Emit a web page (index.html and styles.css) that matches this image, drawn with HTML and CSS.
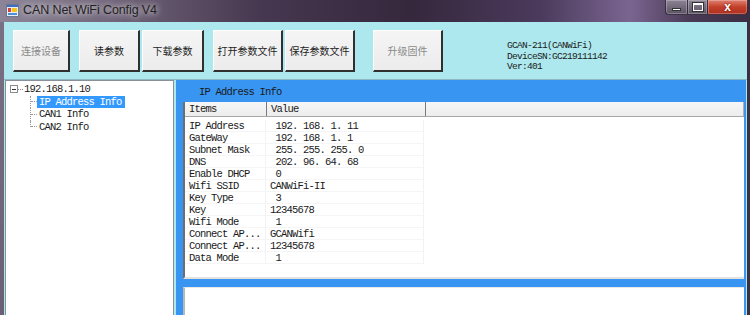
FILE: index.html
```html
<!DOCTYPE html>
<html>
<head>
<meta charset="utf-8">
<link rel="stylesheet" href="styles.css">
</head>
<body>
<div class="win">
  <div class="titlebar">
    <svg class="appicon" width="13" height="13" viewBox="0 0 13 13">
      <rect x="0.5" y="0.5" width="12" height="12" fill="#e8eef4" stroke="#6a7890"/>
      <rect x="1" y="1" width="11" height="2" fill="#3b6fc0"/>
      <rect x="6" y="4" width="5" height="4" fill="#f4c21c"/>
      <rect x="2" y="4" width="3" height="4" fill="#d94030"/>
      <rect x="2" y="9" width="9" height="2" fill="#4a90d8"/>
    </svg>
    <span class="title">CAN Net WiFi Config V4</span>
    <div class="caption">
      <div class="cb cb-min"><span class="min-glyph"></span></div>
      <div class="cb cb-max"><span class="max-glyph"></span></div>
      <div class="cb cb-close">x</div>
    </div>
  </div>
  <div class="frame">
    <div class="frame-left"></div>
    <div class="client">
      <div class="toolbar">
        <div class="btn btn-disabled w57">连接设备</div>
        <div class="btn w61 ml9">读参数</div>
        <div class="btn w62">下载参数</div>
        <div class="btn w70 ml9">打开参数文件</div>
        <div class="btn w70">保存参数文件</div>
        <div class="btn btn-disabled w70 ml18">升级固件</div>
        <div class="devinfo">
          <div>GCAN-211(CANWiFi)</div>
          <div>DeviceSN:GC219111142</div>
          <div>Ver:401</div>
        </div>
      </div>
      <div class="main">
        <div class="tree">
          <div class="tree-row root">
            <span class="expander"><span class="minus"></span></span>
            <span class="root-dash"></span>
            <span class="node-label">192.168.1.10</span>
          </div>
          <div class="children">
            <div class="tree-row child">
              <span class="conn"></span>
              <span class="node-label selected">IP Address Info</span>
            </div>
            <div class="tree-row child">
              <span class="conn"></span>
              <span class="node-label">CAN1 Info</span>
            </div>
            <div class="tree-row child last">
              <span class="conn"></span>
              <span class="node-label">CAN2 Info</span>
            </div>
          </div>
        </div>
        <div class="panel">
          <div class="panel-title">IP Address Info</div>
          <div class="grid">
            <div class="grid-head">
              <div class="hc c-items">Items</div>
              <div class="hc c-value">Value</div>
              <div class="hc c-rest"></div>
            </div>
            <div class="rows">
              <div class="row"><div class="c-items">IP Address</div><div class="c-value">&nbsp;192. 168. 1. 11</div></div>
              <div class="row"><div class="c-items">GateWay</div><div class="c-value">&nbsp;192. 168. 1. 1</div></div>
              <div class="row"><div class="c-items">Subnet Mask</div><div class="c-value">&nbsp;255. 255. 255. 0</div></div>
              <div class="row"><div class="c-items">DNS</div><div class="c-value">&nbsp;202. 96. 64. 68</div></div>
              <div class="row"><div class="c-items">Enable DHCP</div><div class="c-value">&nbsp;0</div></div>
              <div class="row"><div class="c-items">Wifi SSID</div><div class="c-value">CANWiFi-II</div></div>
              <div class="row"><div class="c-items">Key Type</div><div class="c-value">&nbsp;3</div></div>
              <div class="row"><div class="c-items">Key</div><div class="c-value">12345678</div></div>
              <div class="row"><div class="c-items">Wifi Mode</div><div class="c-value">&nbsp;1</div></div>
              <div class="row"><div class="c-items">Connect AP...</div><div class="c-value">GCANWifi</div></div>
              <div class="row"><div class="c-items">Connect AP...</div><div class="c-value">12345678</div></div>
              <div class="row"><div class="c-items">Data Mode</div><div class="c-value">&nbsp;1</div></div>
            </div>
          </div>
          <div class="log"></div>
        </div>
      </div>
    </div>
    <div class="frame-right"></div>
  </div>
</div>
</body>
</html>
```
FILE: styles.css
```css
* { box-sizing: border-box; }
html, body { margin: 0; padding: 0; }
body {
  width: 750px;
  height: 315px;
  overflow: hidden;
  background: #2e2436;
  font-family: "Liberation Sans", Arial, sans-serif;
}
.win {
  width: 750px;
  height: 315px;
  display: flex;
  flex-direction: column;
}
.titlebar {
  height: 22px;
  flex: none;
  display: flex;
  align-items: flex-start;
  background: linear-gradient(to right, #8d8597 0%, #6a5e73 18%, #45374f 35%, #35283d 55%, #4b3a5c 72%, #7a6590 84%, #4a3a55 92%, #3a2e42 100%);
}
.appicon {
  margin: 4px 0 0 6px;
  flex: none;
}
.title {
  margin: 3px 0 0 4px;
  font-size: 12.5px;
  color: #222;
  letter-spacing: -0.1px;
  text-shadow: 0 0 6px rgba(255,255,255,0.8), 0 0 10px rgba(255,255,255,0.5);
}
.caption {
  margin-left: auto;
  margin-right: 2px;
  display: flex;
  height: 15px;
}
.cb {
  height: 15px;
  border: 1px solid rgba(40,30,50,0.8);
  border-top: none;
  display: flex;
  align-items: center;
  justify-content: center;
  box-shadow: inset 0 0 0 1px rgba(255,255,255,0.25);
}
.cb-min {
  width: 23px;
  border-radius: 0 0 0 4px;
  background: linear-gradient(#8c8494, #5c5264);
}
.cb-max {
  width: 20px;
  border-left: none;
  background: linear-gradient(#8c8494, #5c5264);
}
.cb-close {
  width: 40px;
  border-left: none;
  border-radius: 0 0 4px 0;
  background: linear-gradient(#e08070, #c2402a 50%, #b03020);
  color: #fff;
  font-weight: bold;
  font-size: 12px;
  line-height: 13px;
  text-shadow: 0 0 2px #600;
}
.min-glyph {
  display: block;
  width: 9px;
  height: 3px;
  margin-top: 5px;
  background: #fff;
  border: 1px solid #333;
}
.max-glyph {
  display: block;
  width: 10px;
  height: 8px;
  border: 1px solid #fff;
  border-top-width: 2px;
  outline: 1px solid #333;
}
.frame {
  flex: 1;
  display: flex;
  min-height: 0;
}
.frame-left {
  width: 4px;
  flex: none;
  background: linear-gradient(#7a7084, #6a6074);
}
.frame-right {
  width: 3px;
  flex: none;
  background: #3a3040;
}
.client {
  flex: 1;
  background: #ade8ee;
  display: flex;
  flex-direction: column;
  min-width: 0;
}
.toolbar {
  height: 58px;
  flex: none;
  display: flex;
  align-items: flex-start;
  padding: 8px 0 0 9px;
  border-bottom: 1px solid #8fb8c4;
}
.btn {
  height: 42px;
  background: linear-gradient(#f5f5f5, #ececec);
  border-top: 1px solid #ffffff;
  border-left: 1px solid #ffffff;
  border-right: 2px solid #303030;
  border-bottom: 2px solid #303030;
  display: flex;
  align-items: center;
  justify-content: center;
  font-family: "Noto Sans CJK SC", sans-serif;
  font-size: 10px;
  color: #1e1e1e;
  margin-right: 2px;
  white-space: nowrap;
}
.btn-disabled { color: #8a8a8a; }
.w57 { width: 57px; }
.w61 { width: 61px; }
.w62 { width: 62px; }
.w70 { width: 70px; }
.ml9 { margin-left: 7px; }
.ml18 { margin-left: 16px; }
.devinfo {
  margin: 11px 0 0 62px;
  font-family: "Liberation Mono", "DejaVu Sans Mono", monospace;
  font-size: 9.5px;
  letter-spacing: -0.7px;
  line-height: 10.5px;
  color: #1a1a1a;
}
.main {
  flex: 1;
  display: flex;
  min-height: 0;
}
.tree {
  width: 169px;
  margin-left: 1px;
  background: #fff;
  border: 1px solid #8a9098;
  border-bottom: none;
  padding-top: 2px;
  font-family: "Liberation Mono", "DejaVu Sans Mono", monospace;
  font-size: 10.5px;
  letter-spacing: -0.8px;
  color: #1a1a1a;
}
.tree-row {
  height: 12.5px;
  display: flex;
  align-items: center;
}
.expander {
  width: 8px;
  height: 8px;
  margin-left: 4px;
  border: 1px solid #8c8c8c;
  display: flex;
  align-items: center;
  justify-content: center;
  background: #fff;
}
.minus {
  width: 4px;
  height: 1px;
  background: #333;
}
.root-dash {
  width: 5px;
  border-top: 1px dotted #888;
}
.children {
  margin-left: 24px;
}
.conn {
  width: 7px;
  height: 12.5px;
  border-left: 1px dotted #999;
  display: flex;
  align-items: center;
}
.conn::after {
  content: "";
  display: block;
  width: 6px;
  border-top: 1px dotted #999;
}
.last .conn {
  height: 6.5px;
  align-self: flex-start;
  align-items: flex-end;
}
.node-label {
  padding: 0 2px;
  height: 12px;
  line-height: 12px;
  white-space: nowrap;
}
.root .node-label { padding-left: 1px; }
.selected {
  background: #3399ff;
  color: #fff;
  width: 88px;
}
.panel {
  flex: 1;
  margin-left: 2px;
  margin-right: 1px;
  background: #3896f2;
  display: flex;
  flex-direction: column;
  padding-left: 7px;
  padding-right: 2px;
  font-family: "Liberation Mono", "DejaVu Sans Mono", monospace;
  font-size: 10.5px;
  letter-spacing: -0.8px;
  color: #1a1a1a;
}
.panel-title {
  height: 22px;
  flex: none;
  line-height: 24px;
  padding-left: 16px;
}
.grid {
  height: 177px;
  flex: none;
  background: #fff;
  border-left: 2px solid #6e6e6e;
  border-bottom: 2px solid #e2e2e2;
}
.grid-head {
  height: 15px;
  display: flex;
  background: linear-gradient(#f6f6f6, #ededed);
  border-bottom: 1px solid #a8a8a8;
}
.hc {
  height: 14px;
  line-height: 14px;
  border-right: 1px solid #7a7a7a;
}
.grid-head .c-items { width: 82px; padding-left: 4px; }
.grid-head .c-value { width: 159px; padding-left: 4px; }
.grid-head .c-rest { flex: 1; border-right: 1px solid #b0b0b0; }
.rows { padding-top: 3px; }
.row {
  height: 12px;
  display: flex;
  line-height: 12px;
  white-space: pre;
}
.row .c-items {
  width: 81px;
  padding-left: 4px;
  border-right: 1px solid #f2f2f2;
  border-bottom: 1px solid #f5f5f5;
}
.row .c-value {
  width: 158px;
  padding-left: 4px;
  border-right: 1px solid #f2f2f2;
  border-bottom: 1px solid #f5f5f5;
}
.log {
  flex: 1;
  margin-top: 8px;
  background: #fff;
  border-left: 2px solid #b8b8b8;
  border-top: 1px solid #e8e8e8;
}
```
